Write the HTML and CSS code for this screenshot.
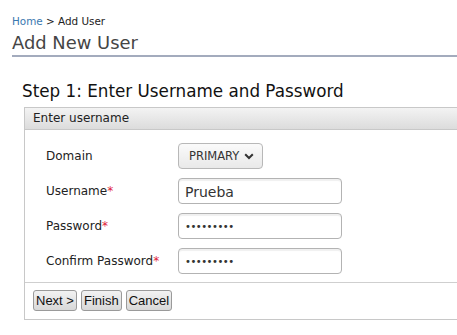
FILE: index.html
```html
<!DOCTYPE html>
<html lang="en">
<head>
    <meta charset="UTF-8">
    <title>Add User</title>
    <link rel="stylesheet" href="styles.css">
</head>
<body>
    <nav class="crumbs"><a href="#">Home</a> &gt; Add User</nav>
    <h1 class="page-title">Add New User</h1>

    <h2 class="step-title">Step 1: Enter Username and Password</h2>
    <section class="wizard">
        <header class="wizard-head">Enter username</header>
        <div class="wizard-body">
            <div class="row">
                <label>Domain</label>
                <button class="select">PRIMARY
                    <svg width="10" height="7" viewBox="0 0 10 7"><path d="M1.2 1.2 L5 5 L8.8 1.2" fill="none" stroke="#333" stroke-width="2"/></svg>
                </button>
            </div>
            <div class="row">
                <label>Username<span class="req">*</span></label>
                <input class="field" type="text" value="Prueba">
            </div>
            <div class="row">
                <label>Password<span class="req">*</span></label>
                <input class="field" type="password" value="123456789">
            </div>
            <div class="row">
                <label>Confirm Password<span class="req">*</span></label>
                <input class="field" type="password" value="123456789">
            </div>
        </div>
        <footer class="wizard-foot">
            <button class="btn">Next &gt;</button>
            <button class="btn">Finish</button>
            <button class="btn">Cancel</button>
        </footer>
    </section>
</body>
</html>
```

FILE: styles.css
```css
html {
    font-family: 'DejaVu Sans', sans-serif;
}

body {
    margin: 0;
    padding: 14px 0 0 12px;
    color: #222;
    overflow: hidden;
}

.crumbs {
    font-size: 10.4px;
    line-height: 14px;
    color: #222;
}

.crumbs a {
    color: #3a78b0;
    text-decoration: none;
}

.page-title {
    margin: 3px 0 0;
    padding-bottom: 0;
    font-size: 17.9px;
    font-weight: normal;
    line-height: 24px;
    color: #454545;
    border-bottom: 2px solid #a3abbd;
}

.step-title {
    margin: 22px 0 0 10px;
    font-size: 16.8px;
    font-weight: normal;
    line-height: 24px;
    color: #111;
}

.wizard {
    margin: 4px 0 0 12px;
    border: 1px solid #c8c8c8;
    border-right: none;
}

.wizard-head {
    padding: 0 8px;
    height: 21px;
    line-height: 20px;
    font-size: 12px;
    color: #222;
    background: linear-gradient(#f3f3f3, #dcdcdc);
    border-bottom: 1px solid #c8c8c8;
}

.wizard-body {
    padding: 13px 0 8px 21px;
    border-bottom: 1px solid #cfcfcf;
}

.row {
    display: flex;
    align-items: center;
    margin-bottom: 9px;
}

.row:last-child {
    margin-bottom: 0;
}

.row label {
    width: 132px;
    font-size: 12px;
    color: #222;
}

.req {
    color: #e0223a;
}

.select {
    display: flex;
    align-items: center;
    gap: 5px;
    height: 26px;
    padding: 0 8px 0 10px;
    font-family: 'DejaVu Sans', sans-serif;
    font-size: 11.5px;
    color: #333;
    background: linear-gradient(#fafafa, #e9e9e9);
    border: 1px solid #b8b8b8;
    border-radius: 4px;
}

.field {
    box-sizing: border-box;
    width: 164px;
    height: 26px;
    padding: 1px 6px 0;
    font-family: 'DejaVu Sans', sans-serif;
    font-size: 14px;
    color: #333;
    border: 1px solid #b3b3b3;
    border-radius: 4px;
    box-shadow: inset 0 2px 1px #f0f0f0;
}

.field[type=password] {
    font-size: 10px;
    letter-spacing: -0.5px;
}

.wizard-foot {
    display: flex;
    gap: 4px;
    padding: 7px 0 8px 8px;
    background: #fff;
}

.btn {
    height: 21px;
    padding: 0 2px;
    font-family: 'Liberation Sans', sans-serif;
    font-size: 13px;
    color: #111;
    background: linear-gradient(#f2f2f2, #d8d8d8);
    border: 1px solid #9a9a9a;
    border-radius: 3px;
}
```
